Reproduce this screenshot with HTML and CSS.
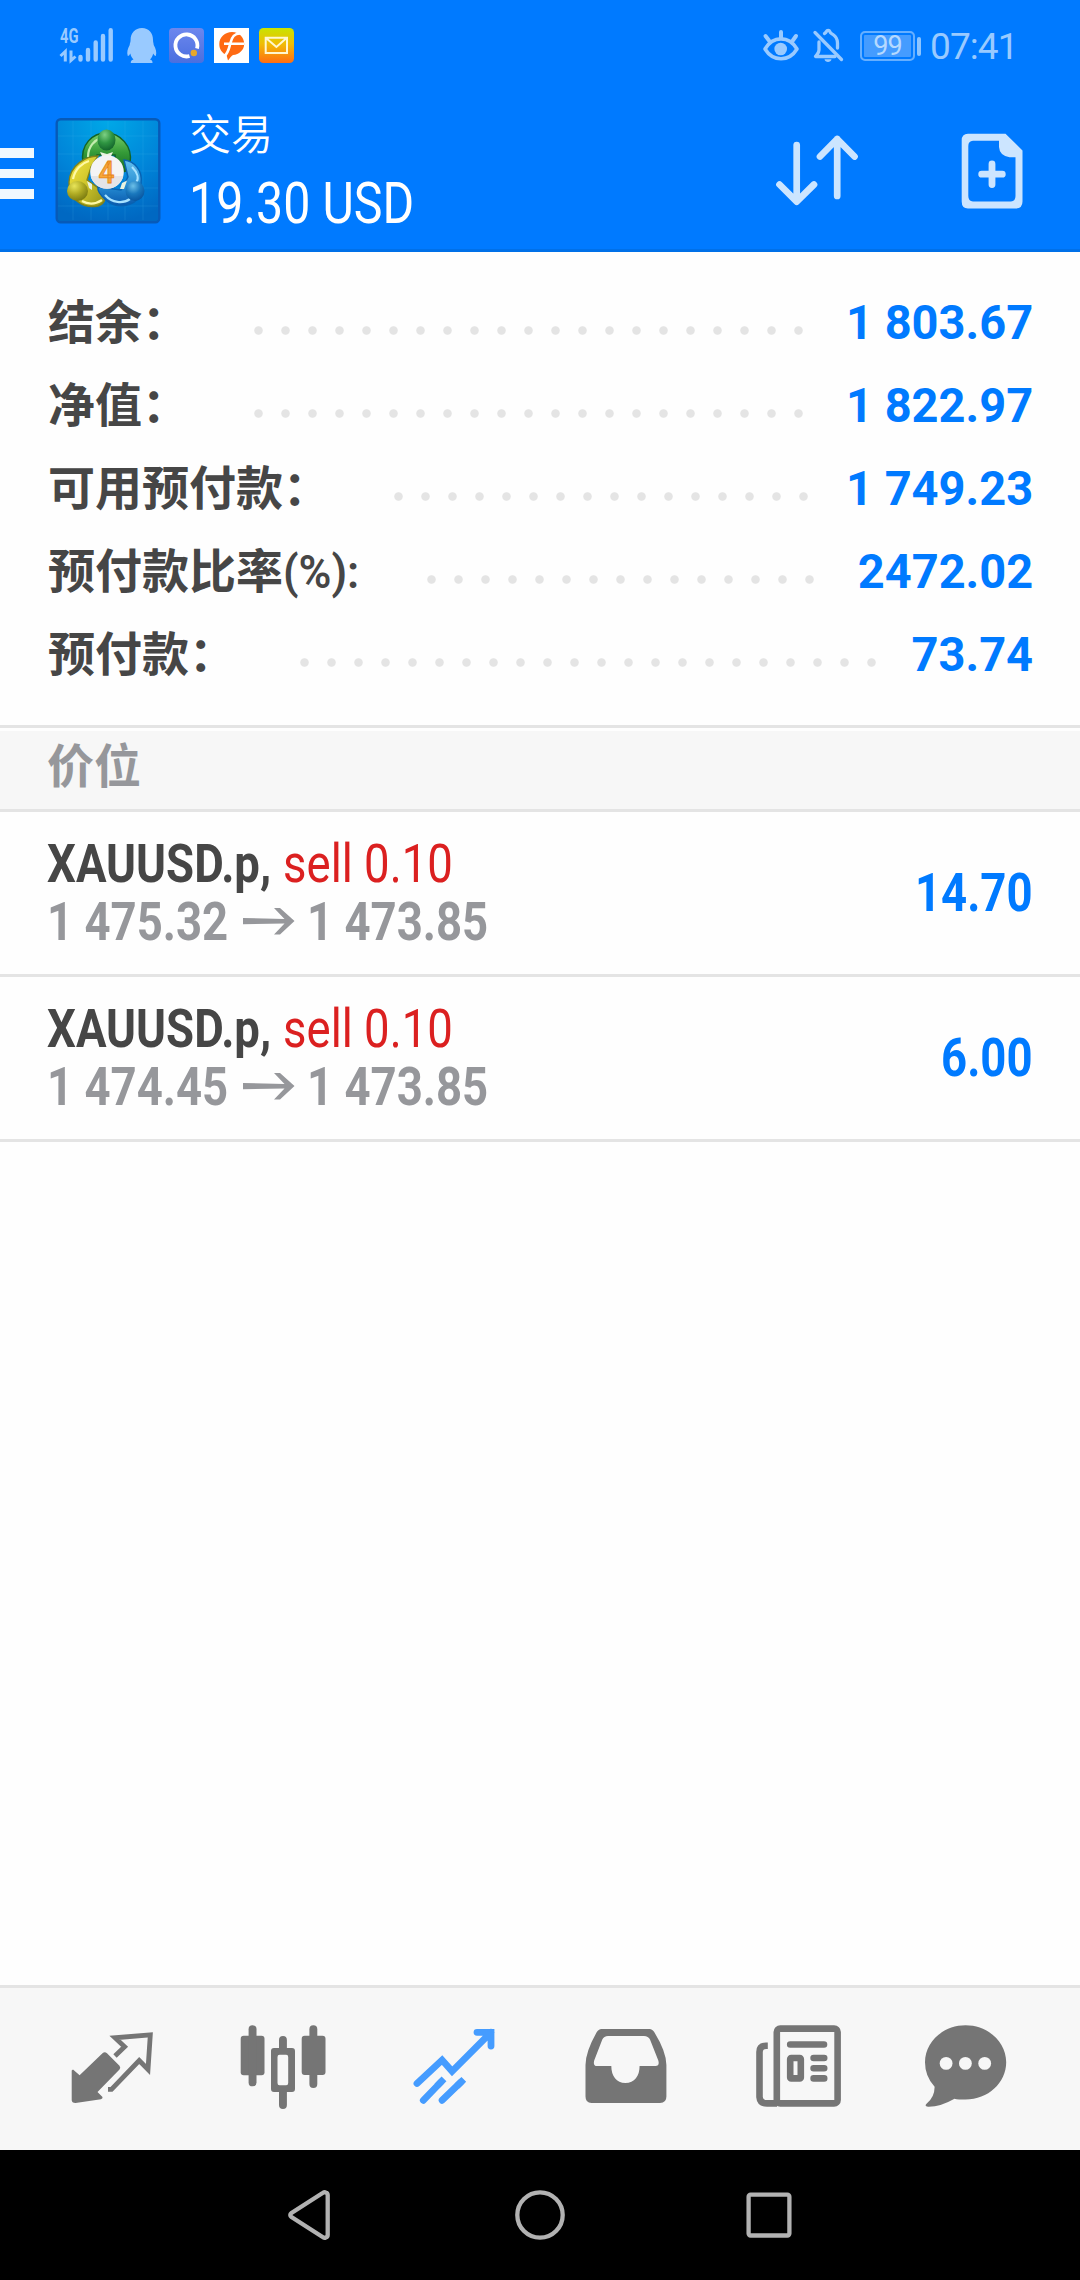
FILE: index.html
```html
<!DOCTYPE html>
<html lang="zh-CN">
<head>
<meta charset="utf-8">
<title>交易</title>
<link rel="stylesheet" href="styles.css">
</head>
<body>
<div class="screen">
  <header class="header">
    <div class="status">
      <div class="status-left">
        <svg class="signal" width="54" height="36" viewBox="0 0 54 36">
          <text class="signal-text" x="0" y="14.8" textLength="18.5" lengthAdjust="spacingAndGlyphs">4G</text>
          <g fill="none" stroke="#99caff" stroke-width="3">
            <path d="M0.5 28 L5.3 23.5 V33.5 M11 22.5 V32.5 L15.5 28.5"/>
            <path d="M20.5 29 V31.5 M28 22 V31.5 M35.7 14.5 V31.5 M43 8 V31.5 M50.7 2.3 V31.5" stroke-width="4.4" stroke-linecap="round"/>
          </g>
        </svg>
        <svg class="penguin" width="30" height="36" viewBox="0 0 30 36"><path fill="#99caff" d="M15 0 C8 0 3.5 5 3.6 12 C3.6 14.5 2.7 15 2.7 17 C.7 20.5 -.5 24.5 .8 28 C2 28 2.8 26.5 3.3 25.5 C4 28.5 5 30 6.5 31.5 C4.5 32.2 3.6 33.2 3.8 35 H25.5 C25.6 33.2 25 32.2 23 31.5 C24.8 29.7 25.6 28 26.2 25.5 C27 27 27.7 28 28.8 28 C30 24.5 28.8 20.5 26.7 17 C26.7 15 26 14.5 26 12 C26.2 5 21.8 0 15 0 Z"/></svg>
        <svg class="app-q" width="35" height="35" viewBox="0 0 35 35">
          <defs><linearGradient id="q" x2="0" y2="1"><stop stop-color="#6c87ee"/><stop offset="1" stop-color="#4a6fdf"/></linearGradient></defs>
          <rect width="35" height="35" rx="4" fill="url(#q)"/>
          <path d="M20.5 28 A11 11 0 1 1 28 20.5" fill="none" stroke="#fff" stroke-width="3.8"/>
          <circle cx="24.8" cy="25" r="3.2" fill="#e8a82a"/>
        </svg>
        <svg class="app-f" width="35" height="35" viewBox="0 0 35 35">
          <rect width="35" height="35" fill="#fff"/>
          <path fill="#ff6a13" d="M18 4 C25 4 30.2 9 30.2 16 C30.2 22 25 26.5 19 27 C17 28 16 30 14 32.5 L12.5 27 C8 25 5.3 21.5 5.3 16 C5.3 9 11 4 18 4 Z"/>
          <path d="M28 5.6 C20 4.5 17.8 9.5 16.4 15 C14.8 21 14.5 24.5 10.5 28 M10 15.8 H30" fill="none" stroke="#fff" stroke-width="2.6"/>
        </svg>
        <svg class="app-mail" width="35" height="35" viewBox="0 0 35 35">
          <defs><linearGradient id="m" x2="0" y2="1"><stop stop-color="#c8e400"/><stop offset=".45" stop-color="#f0bd05"/><stop offset="1" stop-color="#ff6d14"/></linearGradient></defs>
          <rect width="35" height="35" rx="4.5" fill="url(#m)"/>
          <path d="M6.7 9.7 H28 V25 H6.7 Z M7 10 L17.4 19 L27.6 10" fill="none" stroke="#fff7d0" stroke-width="2"/>
        </svg>
      </div>
      <div class="status-right">
        <svg class="eye" width="36" height="36" viewBox="0 0 36 36">
          <g fill="none" stroke="#99caff" stroke-linecap="round">
            <path stroke-width="4" d="M18 4 V10 M2.5 8 L6 12.5 M33 8 L29.8 12.5"/>
            <path stroke-width="3.6" d="M2 21 C10 7.5 26 7.5 34 21 C26 34 10 34 2 21 Z" stroke-linejoin="round"/>
          </g><circle cx="17.7" cy="21" r="6.3" fill="#99caff"/>
        </svg>
        <svg class="bell" width="32" height="36" viewBox="0 0 32 36">
          <g fill="none" stroke="#99caff" stroke-width="3.3" stroke-linecap="round" stroke-linejoin="round">
            <path d="M2 4.5 L28.5 31.5"/>
            <path d="M11.5 5.5 C12.5 5 13 4.5 13.2 3.8 C14.2 1.9 16.2 1.9 17 3.8 C17.3 5.3 18.5 5.5 20 6.5 C23 8.5 24.5 11 24.5 15 V20" />
            <path d="M6 14 V22 C6 24.5 4.5 25.5 2.5 28.5 H22"/>
          </g><path d="M11.5 31.3 H18.5 C18 35 12 35 11.5 31.3 Z" fill="#99caff"/>
        </svg>
        <div class="battery">99</div><div class="battery-tip"></div>
        <div class="clock">07:41</div>
      </div>
    </div>
    <div class="toolbar">
      <div class="menu"><i></i><i></i><i></i></div>
      <svg class="logo" width="106" height="106" viewBox="0 0 106 106">
        <defs>
          <radialGradient id="bg" cx=".5" cy="0" r="1"><stop stop-color="#00a9e8"/><stop offset=".6" stop-color="#0083d8"/><stop offset="1" stop-color="#0068c2"/></radialGradient>
          <linearGradient id="g" x2="0" y2="1"><stop stop-color="#7bd06a"/><stop offset=".5" stop-color="#359b38"/><stop offset="1" stop-color="#146b25"/></linearGradient>
          <linearGradient id="y" x2="1" y2="1"><stop stop-color="#f8ea45"/><stop offset=".5" stop-color="#cfc52b"/><stop offset="1" stop-color="#8f9019"/></linearGradient>
          <linearGradient id="b" x2="0" y2="1"><stop stop-color="#62c0ee"/><stop offset=".6" stop-color="#2389d0"/><stop offset="1" stop-color="#0a58ac"/></linearGradient>
          <radialGradient id="gh" cx=".4" cy=".25" r=".8"><stop stop-color="#7dd084"/><stop offset=".5" stop-color="#2f9542"/><stop offset="1" stop-color="#11602a"/></radialGradient>
          <radialGradient id="yh" cx=".35" cy=".25" r=".8"><stop stop-color="#e8e55a"/><stop offset=".5" stop-color="#b0ac24"/><stop offset="1" stop-color="#77780f"/></radialGradient>
          <radialGradient id="bh" cx=".4" cy=".25" r=".8"><stop stop-color="#6cc0e8"/><stop offset=".5" stop-color="#1a78bd"/><stop offset="1" stop-color="#07529c"/></radialGradient>
        </defs>
        <rect x="1.7" y="1.2" width="102.6" height="103" rx="4" fill="url(#bg)" stroke="#075ab8" stroke-width="2.4"/>
        <path d="M18 3V102 M36 3V102 M53 3V102 M70 3V102 M88 3V102 M3 18H103 M3 36H103 M3 53H103 M3 70H103 M3 88H103" stroke="#49c0f5" stroke-opacity=".16" fill="none"/>
        <path d="M28 45 C25 26 38 15 51 15 C65 15 78 28 75 45 C74 54 67 57 62 48 L60 37 L42 37 L37 45 Z" fill="url(#g)" stroke="#146325" stroke-width="1.5"/>
        <path d="M33 39 C33 28 40 22 46 20" fill="none" stroke="#c2edae" stroke-width="2.2"/>
        <path d="M43 38 C31 38 15 47 14 64 C13 80 27 91 43 88 C49 86 52 81 49 74 L32 62 L36 49 Z" fill="url(#y)" stroke="#82831a" stroke-width="1.4"/>
        <path d="M18 61 C20 51 27 45 34 43 M27 83 C34 87 41 86 47 82" fill="none" stroke="#fff9a5" stroke-width="2.2"/>
        <path d="M69 42 C79 43 88 52 86 66 L86 77 C79 89 62 91 52 83 C46 78 42 73 43 69 L66 72 L73 59 Z" fill="url(#b)" stroke="#0862b2" stroke-width="1.4"/>
        <path d="M77 49 C83 55 84 61 81 65 M50 77 C57 85 68 86 75 81" fill="none" stroke="#a7e2ff" stroke-width="2.2"/>
        <path d="M45 34 L52 36 L58 34 L56 38 H47 Z M32 63 L37 66 L37 72 L34 70 Z M67 65 L72 62.5 L69 71 L65 71 Z" fill="#e9f3df"/>
        <ellipse cx="51.5" cy="22" rx="9" ry="10.5" fill="url(#gh)"/>
        <ellipse cx="22.5" cy="73" rx="10.5" ry="10" fill="url(#yh)"/>
        <ellipse cx="80" cy="73" rx="9.5" ry="10" fill="url(#bh)"/>
        <circle cx="52" cy="54" r="16.8" fill="#f4f4f5"/>
        <path d="M35.7 58 H68.3 A16.8 16.8 0 0 1 35.7 58Z" fill="#e4e4e7"/>
        <text class="logo-digit" x="43.5" y="65" textLength="16" lengthAdjust="spacingAndGlyphs">4</text>
      </svg>
      <div class="titles">
        <div class="title">交易</div>
        <div class="profit"><span class="narrow">19.30 USD</span></div>
      </div>
      <svg class="sort" width="90" height="80" viewBox="0 0 90 80"><g fill="none" stroke="#cce5ff" stroke-width="6.7" stroke-linecap="round" stroke-linejoin="round"><path d="M26.7 15 V71 M9.5 54.5 L26.7 71.7 L44 54.5"/><path d="M67.2 66 V9 M50 26.5 L67.2 9 L84.5 26.5"/></g></svg>
      <svg class="new-order" width="62" height="76" viewBox="0 0 62 76"><path fill="#cce5ff" fill-rule="evenodd" d="M7 .7 H44.5 L61.5 17.5 V68.5 Q61.5 75.5 54.5 75.5 H7 Q.7 75.5 .7 68.5 V7.5 Q.7 .7 7 .7 Z M12 7.8 Q7.3 8.3 7.3 13 V63 Q7.3 68 12 68.5 H50 Q54.5 68 54.5 63 V24.3 H48.5 Q38.5 22.5 38 14 V7.8 Z"/><path d="M31 31 V51.5 M20.7 41.2 H41.3" stroke="#cce5ff" stroke-width="6.8" stroke-linecap="round"/></svg>
    </div>
  </header>

  <section class="summary">
    <div class="sum-row short"><span class="label">结余：</span><span class="dots"></span><span class="value">1 803.67</span></div>
    <div class="sum-row short"><span class="label">净值：</span><span class="dots"></span><span class="value">1 822.97</span></div>
    <div class="sum-row free"><span class="label">可用预付款：</span><span class="dots"></span><span class="value">1 749.23</span></div>
    <div class="sum-row level"><span class="label">预付款比率<span class="percent">(%):</span></span><span class="dots"></span><span class="value">2472.02</span></div>
    <div class="sum-row margin"><span class="label">预付款：</span><span class="dots"></span><span class="value">73.74</span></div>
  </section>

  <div class="section-head">价位</div>

  <section class="positions">
    <div class="position">
      <div class="info">
        <div class="line"><span class="symbol">XAUUSD.p,</span><span class="side">sell 0.10</span></div>
        <div class="line prices"><span class="price">1 475.32</span><svg class="arrow" width="52" height="28" viewBox="0 0 52 28"><path d="M0 11 L41.5 12 L31 1 H37 L51.5 14 L37 27.5 H31 L41.5 16.5 L0 17.3 Z"/></svg><span class="price">1 473.85</span></div>
      </div>
      <div class="result">14.70</div>
    </div>
    <div class="position">
      <div class="info">
        <div class="line"><span class="symbol">XAUUSD.p,</span><span class="side">sell 0.10</span></div>
        <div class="line prices"><span class="price">1 474.45</span><svg class="arrow" width="52" height="28" viewBox="0 0 52 28"><path d="M0 11 L41.5 12 L31 1 H37 L51.5 14 L37 27.5 H31 L41.5 16.5 L0 17.3 Z"/></svg><span class="price">1 473.85</span></div>
      </div>
      <div class="result">6.00</div>
    </div>
  </section>

  <nav class="tabs">
    <svg width="96" height="96" viewBox="0 0 96 96"><path d="M8 48.5 L14.6 54.3 L37.5 32.2 Q39.7 30.3 42 32.2 L54.5 44.7 Q56 46.7 54.5 48.5 L32.5 71 L37.5 76 Q38 77.5 36 78.3 L10.5 82 Q6.7 82 6.7 79 V49.5 Z" fill="#757575"/><path d="M50 35 L59.6 25.7 L50 16.8 L85.3 13.8 L83 48.5 L74.2 39.5 L46.5 68.3 H43" fill="none" stroke="#757575" stroke-width="4.8" stroke-linejoin="miter"/></svg>
    <svg width="96" height="96" viewBox="0 0 96 96"><g fill="#757575"><rect x="4.7" y="14.7" width="23.8" height="39.5" rx="3"/><rect x="12.6" y="4.3" width="7.9" height="61" rx="3.9"/><rect x="65.7" y="14.7" width="23.8" height="39.2" rx="3"/><rect x="73.4" y="4.3" width="7.9" height="62.7" rx="3.9"/><path d="M43 29 V19 Q43 15 47 15 Q50.9 15 50.9 19 V29 Z M43 69 V84 Q43 88 47 88 Q50.9 88 50.9 84 V69 Z"/><path fill-rule="evenodd" d="M38 27 H56 Q59 27 59 30 V68 Q59 71 56 71 H38 Q35 71 35 68 V30 Q35 27 38 27 Z M43.5 33.7 Q41.5 33.7 41.5 36 V62 Q41.5 64.3 43.5 64.3 H50.2 Q52.2 64.3 52.2 62 V36 Q52.2 33.7 50.2 33.7 Z"/></g></svg>
    <svg width="96" height="96" viewBox="0 0 96 96"><g fill="none" stroke="#459cff" stroke-width="6.8"><path stroke-linecap="round" d="M10 62.5 L35.1 39 L45.1 50.3 L84 11.3 M70 11.3 H84 V25"/><path stroke-linecap="round" d="M16.3 79.3 L34 61 M35.1 79.3 L54 61"/><path d="M30 65 L37 57.8 M50 65 L56.8 58.4"/></g></svg>
    <svg width="96" height="96" viewBox="0 0 96 96"><path fill="#757575" fill-rule="evenodd" d="M24.5 8 H72.5 Q75.5 8 77.5 11.5 Q89.4 31 89.4 44 V75.5 Q89.4 82 83 82 H14.5 Q8.5 82 8.5 75.5 V44 Q8.5 31 19.5 11.5 Q21.5 8 24.5 8 Z M31 15 Q27 15 25.3 18.5 L17.2 39.5 Q15.8 45 20 45 H34.3 C34.3 55 39.5 62 48.4 62 C57.5 62 62.6 55 62.6 45 H78.5 Q82.8 45 81.3 39.5 L73 18.5 Q71.3 15 67 15 Z"/></svg>
    <svg width="96" height="96" viewBox="0 0 96 96"><g fill="none" stroke="#757575" stroke-width="6.6"><rect x="28.8" y="7.6" width="60.8" height="74.8" rx="3.5"/><path d="M19.8 24.7 H18 Q11.5 25 11.5 31 V76 Q12 82.4 19 82.4 H29"/><path stroke-linecap="round" d="M42.2 23.5 H76 M65.6 37 H76.2 M65.6 47.2 H76.2 M65.6 57.4 H76.2"/><rect x="42.2" y="37" width="10.6" height="20.4" rx="1"/></g></svg>
    <svg width="96" height="96" viewBox="0 0 96 96"><path fill="#757575" d="M46.6 4.3 C69 4.3 87.2 21 87.2 41.3 C87.2 61.7 69 78.6 46.6 78.6 Q39 78.6 35.5 77.7 Q21 86 9 85.7 Q5.3 85.5 7.3 83 Q15.8 76 15.6 65.7 Q6 55.5 6 41.3 C6 21 24 4.3 46.6 4.3 Z"/><g fill="#f7f7f7"><circle cx="27.1" cy="42.4" r="6.4"/><circle cx="46.4" cy="42.4" r="6.4"/><circle cx="65.7" cy="42.4" r="6.4"/></g></svg>
  </nav>

  <div class="sysnav">
    <svg width="60" height="60" viewBox="0 0 60 60"><path d="M45.6 7.5 Q44.6 6.7 43 7.8 L11.5 28 Q9 30 11.5 32 L43 52.2 Q44.6 53.3 45.6 52.5 Q47.7 52 47.7 50 V10 Q47.7 8 45.6 7.5 Z"/></svg>
    <svg width="60" height="60" viewBox="0 0 60 60"><circle cx="30" cy="30" r="22.7"/></svg>
    <svg width="60" height="60" viewBox="0 0 60 60"><rect x="8.6" y="9.7" width="40.8" height="40.8" rx="2"/></svg>
  </div>
</div>
</body>
</html>
```
FILE: styles.css
```css
* { box-sizing: border-box; }
body { margin: 0; font-family: Roboto, "Noto Sans CJK SC", sans-serif; }
svg { display: block; flex: none; overflow: visible; }
.screen { width: 1080px; height: 2280px; display: flex; flex-direction: column; background: #fefefe; overflow: hidden; }

.header { height: 252px; background: #007aff; border-bottom: 3px solid #0070e8; flex: none; }
.status { height: 90px; padding: 28px 65px 0 60px; display: flex; justify-content: space-between; align-items: flex-start; }
.status-left, .status-right { display: flex; align-items: flex-start; }
.signal-text { font-size: 20px; font-weight: 700; fill: #99caff; }
.penguin { margin-left: 13px; }
.app-q { margin-left: 12px; }
.app-f, .app-mail { margin-left: 10px; }
.bell { margin-left: 14px; }
.battery { margin: 3px 0 0 15px; width: 55px; height: 30px; border: 2px solid #66afff; border-radius: 5px; background: #459cff; box-shadow: inset 0 0 0 2px #007aff; color: #b5d9ff; font-size: 27px; line-height: 27px; text-align: center; letter-spacing: -1px; }
.battery-tip { margin: 9px 0 0 2px; width: 4px; height: 19px; border-radius: 2px; background: #8cc4ff; }
.clock { margin-left: 9px; font-size: 37px; line-height: 38px; color: #99caff; width: 85px; white-space: nowrap; letter-spacing: -.9px; }

.toolbar { height: 159px; display: flex; align-items: flex-start; }
.menu { width: 34px; margin-top: 58px; display: grid; gap: 11px; }
.menu i { height: 9.5px; background: #f0f8ff; }
.logo { margin: 28px 0 0 21px; }
.logo-digit { font-size: 31px; font-weight: 500; fill: #f9a83a; stroke: #e58418; stroke-width: .8px; }
.titles { margin-left: 28px; color: #fff; width: 240px; }
.title { margin-top: 16px; font-size: 42px; line-height: 60px; font-weight: 350; }
.profit { font-size: 57px; line-height: 76px; }
.narrow { display: inline-block; white-space: nowrap; transform: scaleX(.848); transform-origin: left; }
.sort { margin: 40px 0 0 341px; }
.new-order { margin: 43px 0 0 101px; }

.summary { height: 476px; padding: 29px 47px 0 48px; border-bottom: 3px solid #e4e4e4; flex: none; }
.sum-row { height: 83px; display: flex; align-items: center; white-space: nowrap; font-weight: 700; }
.label { flex: none; height: 83px; font-size: 47px; line-height: 76px; font-weight: 700; color: #464646; font-family: "Noto Sans CJK SC", sans-serif; }
.percent { display: inline-block; line-height: 1; font-family: Roboto, sans-serif; transform: scaleX(.95); transform-origin: left; font-weight: 600; }
.dots { height: 27px; margin-top: 15px; background: radial-gradient(circle at center, #e4e4e4 3.8px, transparent 4.7px) 0 0 / 27px 27px repeat-x; }
.value { margin-left: auto; color: #007aff; font-size: 48px; line-height: 83px; transform: scaleX(.979); transform-origin: right; }
.short .label { width: 196.5px; } .short .dots { width: 567px; }
.free .label { width: 337.3px; } .free .dots { width: 432px; }
.level .label { width: 370.3px; } .level .dots { width: 405px; }
.margin .label { width: 243.3px; } .margin .dots { width: 594px; }

.section-head { height: 81px; margin-top: 3px; padding-left: 47px; background: #f7f7f7; border-bottom: 3px solid #e4e4e4; color: #96979b; font-size: 47px; line-height: 63px; font-weight: 700; font-family: "Noto Sans CJK SC", sans-serif; flex: none; }

.position { height: 165px; padding: 0 47px; display: flex; justify-content: space-between; border-bottom: 3px solid #e4e4e4; font-size: 54px; }
.info { padding-top: 21px; }
.line { height: 58px; line-height: 61px; display: flex; white-space: nowrap; }
.symbol, .side, .price, .result { transform: scaleX(.843); transform-origin: left; white-space: nowrap; }
.symbol { font-weight: 700; color: #464646; width: 236px; }
.side { color: #db2020; }
.prices { color: #96979b; font-weight: 700; }
.price { width: 196px; }
.arrow { margin: 16px 12px 0 0; }
.arrow path { fill: #96979b; }
.result { transform-origin: right; color: #007aff; font-weight: 700; line-height: 161px; }

.tabs { margin-top: auto; height: 165px; padding: 0 28px; border-top: 3px solid #e4e4e4; background: #f7f7f7; display: grid; grid-template-columns: repeat(6, 1fr); place-items: center; flex: none; }
.sysnav { height: 130px; background: #000; display: grid; grid-template-columns: repeat(3, 230px); justify-content: center; place-items: center; flex: none; }
.sysnav svg { fill: none; stroke: #b2b2b2; stroke-width: 4.3; }
```
